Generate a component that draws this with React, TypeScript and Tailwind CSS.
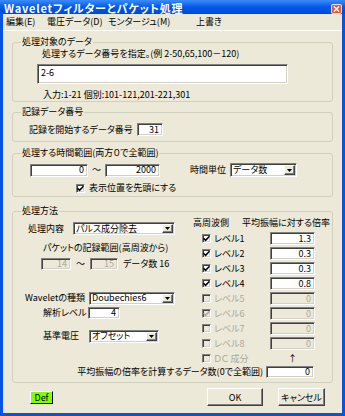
import React from "react";

// classic 3D borders
const sunken =
  "border border-t-[#808080] border-l-[#808080] border-b-white border-r-white shadow-[inset_1px_1px_0_#404040,inset_-1px_-1px_0_#d4d0c8]";
const raised =
  "border border-t-white border-l-white border-b-[#404040] border-r-[#404040] shadow-[inset_-1px_-1px_0_#808080]";

function Field({ value, className, disabled, left }: { value: string; className: string; disabled?: boolean; left?: boolean }) {
  return (
    <div
      className={`${sunken} ${disabled ? "bg-[#ECE9D8] text-[#ACA899]" : "bg-white"} flex items-center ${left ? "justify-start" : "justify-end"} px-[3px] leading-[10px] ${className}`}
    >
      {value}
    </div>
  );
}

function Combo({ text, className }: { text: string; className: string }) {
  return (
    <div className={`${sunken} bg-white flex items-stretch p-[1px] ${className}`}>
      <span className="flex-1 flex items-center pl-[1px] leading-[10px]">{text}</span>
      <span className={`${raised} w-[11px] bg-[#ECE9D8] flex items-center justify-center`}>
        <svg width="5" height="3" viewBox="0 0 5 3">
          <path d="M0 0h5L2.5 3z" fill="#000" />
        </svg>
      </span>
    </div>
  );
}

function Check({ checked, disabled }: { checked?: boolean; disabled?: boolean }) {
  return (
    <span className={`${sunken} w-[9px] h-[9px] shrink-0 flex items-center justify-center ${disabled ? "bg-[#ECE9D8]" : "bg-white"}`}>
      {checked && (
        <svg width="7" height="7" viewBox="0 0 7 7">
          <path d="M0.5 3.2 L2.6 5.3 L6.5 1.2" stroke={disabled ? "#ACA899" : "#000"} strokeWidth="1.6" fill="none" />
        </svg>
      )}
    </span>
  );
}

function Group({ label, className, children }: { label: string; className: string; children: React.ReactNode }) {
  return (
    <fieldset className={`mx-[9px] border border-[#D0D0BF] rounded-[3px] p-0 ${className}`}>
      <legend className="ml-[8px] px-[1px] leading-[12px]">{label}</legend>
      {children}
    </fieldset>
  );
}

const levels = [
  { name: "レベル1", v: "1.3", on: true },
  { name: "レベル2", v: "0.3", on: true },
  { name: "レベル3", v: "0.3", on: true },
  { name: "レベル4", v: "0.8", on: true },
  { name: "レベル5", v: "0", on: false, off: true },
  { name: "レベル6", v: "0", on: true, off: true },
  { name: "レベル7", v: "0", on: false, off: true },
  { name: "レベル8", v: "0", on: false, off: true },
];

export default function App() {
  return (
    <div className="w-[345px] h-[416px] bg-[#0853E2] flex flex-col pb-[3px] text-[9px] text-black whitespace-nowrap font-[family-name:'Noto_Sans_CJK_JP',sans-serif] [font-feature-settings:'palt'_1] overflow-hidden">
      {/* Title bar */}
      <div className="h-[14px] shrink-0 flex items-start pt-[3px] pl-[4px] pr-[3px] bg-gradient-to-b from-[#3B8CF5] via-[#0058EA] to-[#0049D6]">
        <span className="text-white font-bold text-[11px] leading-[11px] tracking-[0.8px]">Waveletフィルターとパケット処理</span>
        <span className="ml-auto mt-[1px] w-[11px] h-[10px] rounded-[2px] border border-white/80 bg-[#E2593A] flex items-center justify-center">
          <svg width="7" height="6" viewBox="0 0 7 6">
            <path d="M1 0.5 L6 5.5 M6 0.5 L1 5.5" stroke="#fff" strokeWidth="1.5" />
          </svg>
        </span>
      </div>

      <div className="flex-1 mx-[3px] bg-[#ECE9D8] flex flex-col">
        {/* Menu */}
        <div className="h-[17px] shrink-0 flex items-center pl-[3px] border-b border-white">
          <span className="w-[41px]">編集(E)</span>
          <span className="w-[61px]">電圧データ(D)</span>
          <span className="w-[88px]">モンタージュ(M)</span>
          <span>上書き</span>
        </div>

        <Group label="処理対象のデータ" className="mt-[5px]">
          <div className="pl-[24px] flex flex-col items-start">
            <span className="ml-[5px] leading-[12px]">処理するデータ番号を指定。(例 2-50,65,100－120)</span>
            <Field value="2-6" left className="mt-[4px] w-[251px] h-[20px] !items-start pt-[3px]" />
            <span className="ml-[6px] mt-[5px] leading-[12px]">入力:1-21 個別:101-121,201-221,301</span>
          </div>
        </Group>

        <Group label="記録データ番号" className="mt-[4px]">
          <div className="mt-[5px] pb-[5px] h-[18px] flex items-start pl-[16px]">
            <span className="w-[108px] leading-[13px]">記録を開始するデータ番号</span>
            <Field value="31" className="w-[26px] h-[13px]" />
          </div>
        </Group>

        <Group label="処理する時間範囲(両方０で全範囲)" className="mt-[5px]">
          <div className="mt-[4px] h-[14px] flex items-center pl-[17px]">
            <Field value="0" className="w-[58px] h-[13px]" />
            <span className="w-[17px] text-center">～</span>
            <Field value="2000" className="w-[55px] h-[13px]" />
            <span className="ml-[30px] w-[40px]">時間単位</span>
            <Combo text="データ数" className="w-[67px] h-[14px]" />
          </div>
          <div className="mt-[5px] mb-[2px] h-[12px] flex items-center pl-[63px]">
            <Check checked />
            <span className="ml-[4px]">表示位置を先頭にする</span>
          </div>
        </Group>

        <Group label="処理方法" className="mt-[8px]">
          <div className="flex">
            {/* left column */}
            <div className="w-[172px] flex flex-col">
              <div className="mt-[5px] h-[13px] flex items-center pl-[15px]">
                <span className="w-[45px]">処理内容</span>
                <Combo text="パルス成分除去" className="w-[102px] h-[13px]" />
              </div>
              <span className="mt-[7px] leading-[12px] pl-[30px]">パケットの記録範囲(高周波から)</span>
              <div className="mt-[4px] h-[12px] flex items-center pl-[28px]">
                <Field value="14" disabled className="w-[30px] h-[12px]" />
                <span className="w-[19px] text-center">～</span>
                <Field value="15" disabled className="w-[28px] h-[12px]" />
                <span className="ml-[5px]">データ数 16</span>
              </div>
              <div className="mt-[22px] h-[12px] flex items-center pl-[12px]">
                <span className="w-[64px]">Waveletの種類</span>
                <Combo text="Doubechies6" className="w-[86px] h-[13px]" />
              </div>
              <div className="mt-[3px] h-[12px] flex items-center pl-[30px]">
                <span className="w-[45px]">解析レベル</span>
                <Field value="4" className="w-[32px] h-[12px]" />
              </div>
              <div className="mt-[11px] h-[12px] flex items-center pl-[30px]">
                <span className="w-[46px]">基準電圧</span>
                <Combo text="オフセット" className="w-[70px] h-[13px]" />
              </div>
            </div>

            {/* right column */}
            <div className="flex flex-col">
              <div className="h-[11px] leading-[11px] flex pl-[8px]">
                <span className="w-[49px]">高周波側</span>
                <span>平均振幅に対する倍率</span>
              </div>
              <div className="mt-[3px] flex flex-col">
                {levels.map((l) => (
                  <div key={l.name} className="h-[15px] flex items-center pl-[17px]">
                    <Check checked={l.on} disabled={l.off} />
                    <span className={`ml-[3px] w-[56px] ${l.off ? "text-[#ACA899]" : ""}`}>{l.name}</span>
                    <Field value={l.v} disabled={l.off} className="w-[45px] h-[13px]" />
                  </div>
                ))}
                <div className="h-[15px] flex items-center pl-[17px]">
                  <Check disabled />
                  <span className="ml-[3px] w-[56px] text-[#ACA899]">ＤＣ 成分</span>
                  <span className="w-[45px] text-center leading-none">↑</span>
                </div>
              </div>
            </div>
          </div>
          <div className="h-[12px] mb-[4px] flex items-center justify-end pr-[18px]">
            <span className="mr-[3px]">平均振幅の倍率を計算するデータ数(0で全範囲)</span>
            <Field value="0" className="w-[48px] h-[12px]" />
          </div>
        </Group>

        {/* Buttons */}
        <div className="mt-[5px] h-[18px] flex items-center pl-[27px]">
          <button className="w-[23px] h-[13px] bg-[#80FF00] border border-t-white border-l-white border-b-black border-r-black text-[9px] leading-none flex items-center justify-center">
            Def
          </button>
          <button className={`${raised} ml-[154px] w-[56px] h-[18px] bg-[#ECE9D8] text-[9px] leading-none`}>OK</button>
          <button className={`${raised} ml-[15px] w-[47px] h-[18px] bg-[#ECE9D8] text-[9px] leading-none`}>キャンセル</button>
        </div>
      </div>
    </div>
  );
}
